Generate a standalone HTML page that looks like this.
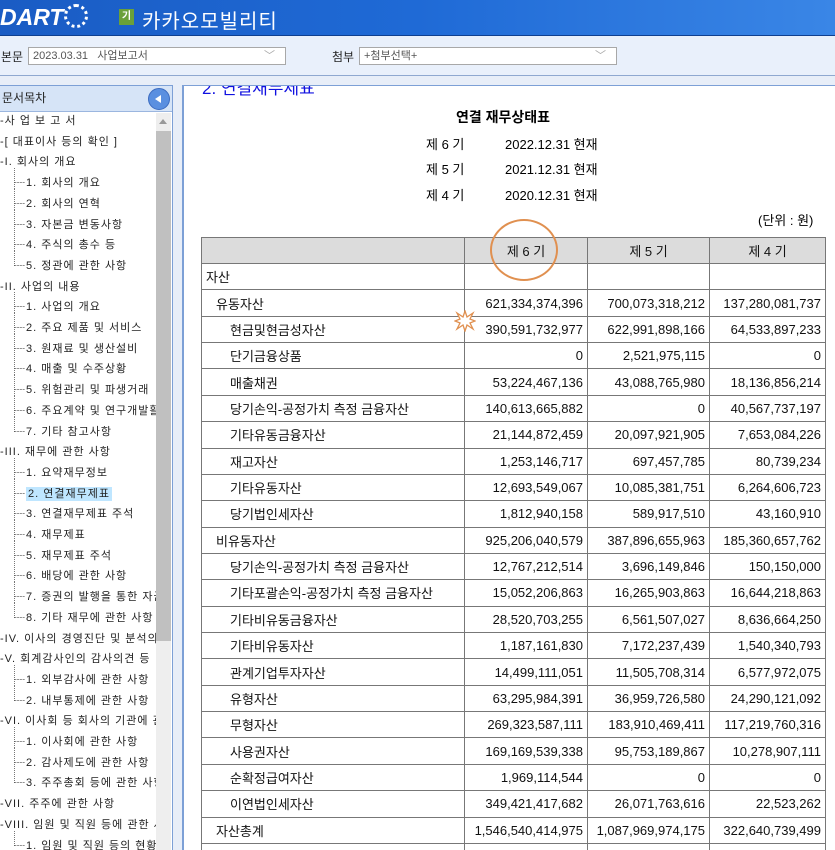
<!DOCTYPE html>
<html><head><meta charset="utf-8">
<style>
*{margin:0;padding:0;box-sizing:border-box}
html,body{width:835px;height:850px;overflow:hidden}
body{background:#e8eef8;font-family:"Liberation Sans","Noto Sans CJK KR","NanumGothic",sans-serif;position:relative}
.hdr{position:absolute;left:0;top:0;width:835px;height:36px;background:linear-gradient(90deg,#1a5cc4 0%,#1f6ad6 50%,#3a86e6 100%);border-bottom:1px solid #0f3f8f}
.logo{position:absolute;left:0;top:4px;color:#fff;font-weight:bold;font-size:23px;font-style:italic}
.logo span{display:inline-block;width:24px;height:24px;border-radius:50%;border:3px dotted #fff;vertical-align:-3px;margin-left:1px}
.badge{position:absolute;left:119px;top:9px;width:15px;height:16px;background:#6aa03a;color:#fff;font-size:10px;text-align:center;line-height:16px;font-weight:bold}
.title{position:absolute;left:142px;top:5px;color:#fff;font-size:20px;letter-spacing:1px}
.tb{position:absolute;left:0;top:36px;width:835px;height:40px;background:#e9f0fb;border-bottom:1px solid #8fa8d0}
.lbl{position:absolute;top:12px;font-size:12px;color:#222}
.sel{position:absolute;top:11px;height:18px;border:1px solid #a8a8a8;background:#fff;font-size:11px;color:#555;padding-left:4px;line-height:16px}
.sel i{position:absolute;right:10px;top:0px;font-style:normal;color:#aaa;font-size:11px}
.side{position:absolute;left:-1px;top:85px;width:174px;height:770px;border:1px solid #7da0d6;background:#fff}
.sh{height:26px;background:#d6e4f7;border-bottom:1px solid #9bb6df;font-size:12px;line-height:25px;padding-left:2px;color:#222}
.btn{position:absolute;left:148px;top:2px;width:22px;height:22px;border-radius:50%;background:#5a8fe0;border:1px solid #3b6bc0}
.btn:after{content:"";position:absolute;left:6px;top:6px;border-right:6px solid #fff;border-top:4px solid transparent;border-bottom:4px solid transparent}
.sb{position:absolute;left:156px;top:27px;width:15px;height:750px;background:#eee}
.sb .th{position:absolute;left:0;top:18px;width:15px;height:510px;background:#c0c0c0}
.sb .ar{position:absolute;left:3px;top:6px;border-bottom:5px solid #999;border-left:4px solid transparent;border-right:4px solid transparent}
.it{position:absolute;font-size:11px;color:#222;white-space:nowrap;line-height:14px;width:156px;overflow:hidden;letter-spacing:1px}
.vl{position:absolute;border-left:1px dotted #777}
.cont{position:absolute;left:182px;top:85px;width:660px;height:770px;background:#fff;border-left:2px solid #7da0d6;border-top:1px solid #7da0d6;overflow:hidden}
table{position:absolute;left:17px;top:151px;border-collapse:collapse;font-size:13px;color:#111;table-layout:fixed}
td{border:1px solid #777;height:26.36px;padding:0 4px;white-space:nowrap;overflow:hidden}
td.n{text-align:right}
th{background:#dcdcdc;border:1px solid #777;font-weight:normal;height:26px}
</style></head><body>
<div class="hdr"><div class="logo">DART<span></span></div><div class="badge">기</div><div class="title">카카오모빌리티</div></div>
<div class="tb">
<div class="lbl" style="left:1px">본문</div>
<div class="sel" style="left:28px;width:258px">2023.03.31&nbsp;&nbsp;&nbsp;사업보고서<i>﹀</i></div>
<div class="lbl" style="left:332px">첨부</div>
<div class="sel" style="left:359px;width:258px">+첨부선택+<i>﹀</i></div>
</div>
<div class="side"><div class="sh">문서목차<div class="btn"></div></div>
<div class="sb"><div class="ar"></div><div class="th"></div></div>
</div>
<div id="items"></div>
<div class="cont">
<div style="position:absolute;left:18px;top:-12px;color:#1010e0;font-size:17px">2. 연결재무제표</div>
<div style="position:absolute;left:272px;top:21px;font-size:14px;font-weight:bold">연결 재무상태표</div>
<div style="position:absolute;left:242px;top:48px;font-size:13px">제 6 기</div><div style="position:absolute;left:321px;top:48px;font-size:13px">2022.12.31 현재</div>
<div style="position:absolute;left:242px;top:73px;font-size:13px">제 5 기</div><div style="position:absolute;left:321px;top:73px;font-size:13px">2021.12.31 현재</div>
<div style="position:absolute;left:242px;top:99px;font-size:13px">제 4 기</div><div style="position:absolute;left:321px;top:99px;font-size:13px">2020.12.31 현재</div>
<div style="position:absolute;left:574px;top:124px;font-size:13px">(단위 : 원)</div>
<table>
<colgroup><col style="width:263px"><col style="width:123px"><col style="width:122px"><col style="width:116px"></colgroup>
<tr><th></th><th>제 6 기</th><th>제 5 기</th><th>제 4 기</th></tr>
<tr><td>자산</td><td></td><td></td><td></td></tr>
<tr><td style="padding-left:14px">유동자산</td><td class="n">621,334,374,396</td><td class="n">700,073,318,212</td><td class="n">137,280,081,737</td></tr>
<tr><td style="padding-left:28px">현금및현금성자산</td><td class="n">390,591,732,977</td><td class="n">622,991,898,166</td><td class="n">64,533,897,233</td></tr>
<tr><td style="padding-left:28px">단기금융상품</td><td class="n">0</td><td class="n">2,521,975,115</td><td class="n">0</td></tr>
<tr><td style="padding-left:28px">매출채권</td><td class="n">53,224,467,136</td><td class="n">43,088,765,980</td><td class="n">18,136,856,214</td></tr>
<tr><td style="padding-left:28px">당기손익-공정가치 측정 금융자산</td><td class="n">140,613,665,882</td><td class="n">0</td><td class="n">40,567,737,197</td></tr>
<tr><td style="padding-left:28px">기타유동금융자산</td><td class="n">21,144,872,459</td><td class="n">20,097,921,905</td><td class="n">7,653,084,226</td></tr>
<tr><td style="padding-left:28px">재고자산</td><td class="n">1,253,146,717</td><td class="n">697,457,785</td><td class="n">80,739,234</td></tr>
<tr><td style="padding-left:28px">기타유동자산</td><td class="n">12,693,549,067</td><td class="n">10,085,381,751</td><td class="n">6,264,606,723</td></tr>
<tr><td style="padding-left:28px">당기법인세자산</td><td class="n">1,812,940,158</td><td class="n">589,917,510</td><td class="n">43,160,910</td></tr>
<tr><td style="padding-left:14px">비유동자산</td><td class="n">925,206,040,579</td><td class="n">387,896,655,963</td><td class="n">185,360,657,762</td></tr>
<tr><td style="padding-left:28px">당기손익-공정가치 측정 금융자산</td><td class="n">12,767,212,514</td><td class="n">3,696,149,846</td><td class="n">150,150,000</td></tr>
<tr><td style="padding-left:28px">기타포괄손익-공정가치 측정 금융자산</td><td class="n">15,052,206,863</td><td class="n">16,265,903,863</td><td class="n">16,644,218,863</td></tr>
<tr><td style="padding-left:28px">기타비유동금융자산</td><td class="n">28,520,703,255</td><td class="n">6,561,507,027</td><td class="n">8,636,664,250</td></tr>
<tr><td style="padding-left:28px">기타비유동자산</td><td class="n">1,187,161,830</td><td class="n">7,172,237,439</td><td class="n">1,540,340,793</td></tr>
<tr><td style="padding-left:28px">관계기업투자자산</td><td class="n">14,499,111,051</td><td class="n">11,505,708,314</td><td class="n">6,577,972,075</td></tr>
<tr><td style="padding-left:28px">유형자산</td><td class="n">63,295,984,391</td><td class="n">36,959,726,580</td><td class="n">24,290,121,092</td></tr>
<tr><td style="padding-left:28px">무형자산</td><td class="n">269,323,587,111</td><td class="n">183,910,469,411</td><td class="n">117,219,760,316</td></tr>
<tr><td style="padding-left:28px">사용권자산</td><td class="n">169,169,539,338</td><td class="n">95,753,189,867</td><td class="n">10,278,907,111</td></tr>
<tr><td style="padding-left:28px">순확정급여자산</td><td class="n">1,969,114,544</td><td class="n">0</td><td class="n">0</td></tr>
<tr><td style="padding-left:28px">이연법인세자산</td><td class="n">349,421,417,682</td><td class="n">26,071,763,616</td><td class="n">22,523,262</td></tr>
<tr><td style="padding-left:14px">자산총계</td><td class="n">1,546,540,414,975</td><td class="n">1,087,969,974,175</td><td class="n">322,640,739,499</td></tr>
<tr><td></td><td></td><td></td><td></td></tr>
</table>
<div style="position:absolute;left:306px;top:133px;width:68px;height:62px;border:2px solid #e09050;border-radius:50%"></div>
<svg style="position:absolute;left:270px;top:224px" width="22" height="22" viewBox="0 0 22 22"><polygon points="11,1 13,7 19,3 16,9 21,11 16,13 19,19 13,15 11,21 9,15 3,19 6,13 1,11 6,9 3,3 9,7" fill="#fff" stroke="#e09050" stroke-width="1.3"/></svg>
</div>
<script>
var L=[[0,"사 업 보 고 서"],[0,"[ 대표이사 등의 확인 ]"],[0,"I. 회사의 개요"],[1,"1. 회사의 개요"],[1,"2. 회사의 연혁"],[1,"3. 자본금 변동사항"],[1,"4. 주식의 총수 등"],[1,"5. 정관에 관한 사항"],[0,"II. 사업의 내용"],[1,"1. 사업의 개요"],[1,"2. 주요 제품 및 서비스"],[1,"3. 원재료 및 생산설비"],[1,"4. 매출 및 수주상황"],[1,"5. 위험관리 및 파생거래"],[1,"6. 주요계약 및 연구개발활동"],[1,"7. 기타 참고사항"],[0,"III. 재무에 관한 사항"],[1,"1. 요약재무정보"],[1,"2. 연결재무제표"],[1,"3. 연결재무제표 주석"],[1,"4. 재무제표"],[1,"5. 재무제표 주석"],[1,"6. 배당에 관한 사항"],[1,"7. 증권의 발행을 통한 자금조달"],[1,"8. 기타 재무에 관한 사항"],[0,"IV. 이사의 경영진단 및 분석의견"],[0,"V. 회계감사인의 감사의견 등"],[1,"1. 외부감사에 관한 사항"],[1,"2. 내부통제에 관한 사항"],[0,"VI. 이사회 등 회사의 기관에 관한 사항"],[1,"1. 이사회에 관한 사항"],[1,"2. 감사제도에 관한 사항"],[1,"3. 주주총회 등에 관한 사항"],[0,"VII. 주주에 관한 사항"],[0,"VIII. 임원 및 직원 등에 관한 사항"],[1,"1. 임원 및 직원 등의 현황"]];
var h="";L.forEach(function(a,i){var y=114+i*20.7;
if(a[0]){h+='<div class="vl" style="left:14px;top:'+(y-8)+'px;height:'+(i+1<L.length&&L[i+1][0]?21:15)+'px"></div>';
h+='<div class="it" style="left:14px;top:'+y+'px;width:142px">'+(a[1]=="2. 연결재무제표"?'┈<span style="background:#bfe6ff;padding:2px 2px">'+a[1]+'</span>':'┈'+a[1])+'</div>';}
else h+='<div class="it" style="left:0;top:'+y+'px">-'+a[1]+'</div>';});
document.getElementById("items").innerHTML=h;
</script>
</body></html>
